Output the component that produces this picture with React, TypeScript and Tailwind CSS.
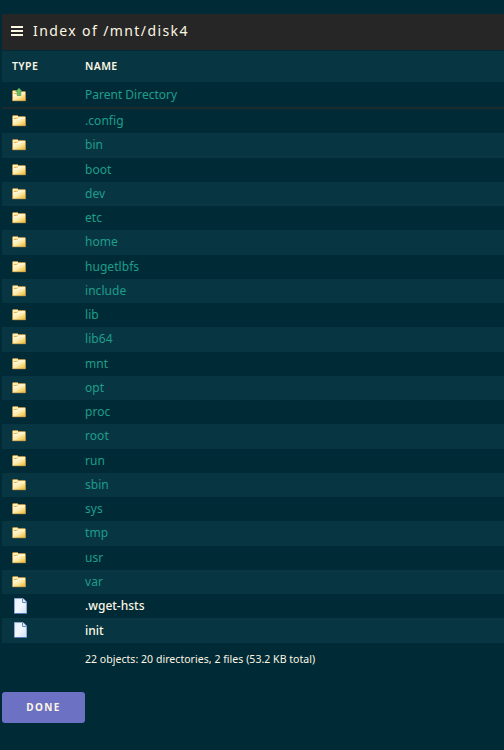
import clsx from 'clsx';

interface Entry {
  name: string;
  kind: 'folder' | 'file';
}

const folders = [
  '.config', 'bin', 'boot', 'dev', 'etc', 'home', 'hugetlbfs', 'include', 'lib', 'lib64',
  'mnt', 'opt', 'proc', 'root', 'run', 'sbin', 'sys', 'tmp', 'usr', 'var',
];

const entries: Entry[] = [
  ...folders.map((name): Entry => ({ name, kind: 'folder' })),
  { name: '.wget-hsts', kind: 'file' },
  { name: 'init', kind: 'file' },
];

function FolderIcon({ up = false }: { up?: boolean }) {
  return (
    <svg viewBox="0 0 16 16" className={clsx('w-4 h-4 ml-[9px] block', up && 'mt-[2px]')}>
      <defs>
        <linearGradient id="folderFill" x1="0" y1="0" x2="1" y2="1">
          <stop offset="0" stopColor="#fffdf0" />
          <stop offset="0.5" stopColor="#fbeaa8" />
          <stop offset="1" stopColor="#edb92c" />
        </linearGradient>
      </defs>
      <path d="M1.5 12.7V3.5Q1.5 2.5 2.5 2.5H6.5L7.5 3.5H13.5Q14.5 3.5 14.5 4.5V12.7Z" fill="#fdf0b8" stroke="#b98d45" />
      <path d="M2 12.4V7H6.5L8 5.5H14V12.4Z" fill="url(#folderFill)" />
      <path d="M3 5.5H5.5L6.5 4.8" fill="none" stroke="#d9a648" strokeWidth="0.9" />
      <path d="M2.5 6.6H6.8L8.3 5.1H13.5" fill="none" stroke="#fffdf0" strokeWidth="0.7" />
      {up && <path d="M8 0.1L11.2 3.4H9.8V7.5H6.2V3.4H4.8Z" fill="#6dbb63" stroke="#3b8d4d" strokeWidth="0.6" />}
    </svg>
  );
}

function FileIcon() {
  return (
    <svg viewBox="0 0 14 16" className="w-[14px] h-4 ml-[12px] block">
      <defs>
        <linearGradient id="fileFill" x1="0" y1="0" x2="1" y2="1">
          <stop offset="0" stopColor="#e3eefc" />
          <stop offset="0.5" stopColor="#f2f7ff" />
          <stop offset="1" stopColor="#cfe0fa" />
        </linearGradient>
      </defs>
      <path d="M0.5 0.5H9L12.5 4V15.5H0.5Z" fill="url(#fileFill)" stroke="#8fa9d3" />
      <path d="M8.5 0.5V4.5H12.5" fill="#e3eefc" stroke="#6488bd" />
      <path d="M0 15.5H13" stroke="#5478b5" />
    </svg>
  );
}

export default function App() {
  return (
    <div className="h-[750px] pt-[14px] pl-[2px] bg-[#002b36] overflow-hidden text-[#fdf6e3] font-['Noto_Sans',sans-serif]">
      {/* Title bar */}
      <div className="h-9 flex items-center bg-[#262626]">
        <svg viewBox="0 0 12 10" className="w-3 h-[10px] ml-[9px] mb-[2px]">
          <path d="M0 1H12M0 5H12M0 9H12" stroke="currentColor" strokeWidth="2" />
        </svg>
        <h1 className="ml-[10px] text-[14px] leading-[34px] tracking-[1.4px] pb-[2px] whitespace-nowrap">
          Index of /mnt/disk4
        </h1>
      </div>

      {/* Column headings */}
      <div className="mt-px h-[31px] grid grid-cols-[83px_1fr] items-center bg-[#073642] text-[10.5px] tracking-[0.4px] font-semibold">
        <span className="pl-[10px]">TYPE</span>
        <span>NAME</span>
      </div>

      <div className="h-[27px] grid grid-cols-[83px_1fr] items-center border-b-2 border-[#1c2a2d] text-xs">
        <FolderIcon up />
        <a className="text-[#1f9d8b]">Parent Directory</a>
      </div>

      {entries.map((entry, i) => (
        <div
          key={entry.name}
          className={clsx(
            'h-[24.25px] grid grid-cols-[83px_1fr] items-center text-xs',
            i % 2 === 1 && 'bg-[#073642]',
          )}
        >
          {entry.kind === 'folder' ? <FolderIcon /> : <FileIcon />}
          <a className={entry.kind === 'folder' ? 'text-[#1f9d8b] tracking-[0.05px]' : 'pt-[0.5px] font-medium'}>{entry.name}</a>
        </div>
      ))}

      <p className="pl-[83px] mt-2 text-[10.5px] leading-[17px] tracking-[0.04px] whitespace-nowrap">
        22 objects: 20 directories, 2 files (53.2 KB total)
      </p>

      <button className="mt-[24px] w-[83px] h-[31px] rounded-[3px] bg-[#6c71c4] text-[10px] font-bold tracking-[1.4px] block">
        DONE
      </button>
    </div>
  );
}
